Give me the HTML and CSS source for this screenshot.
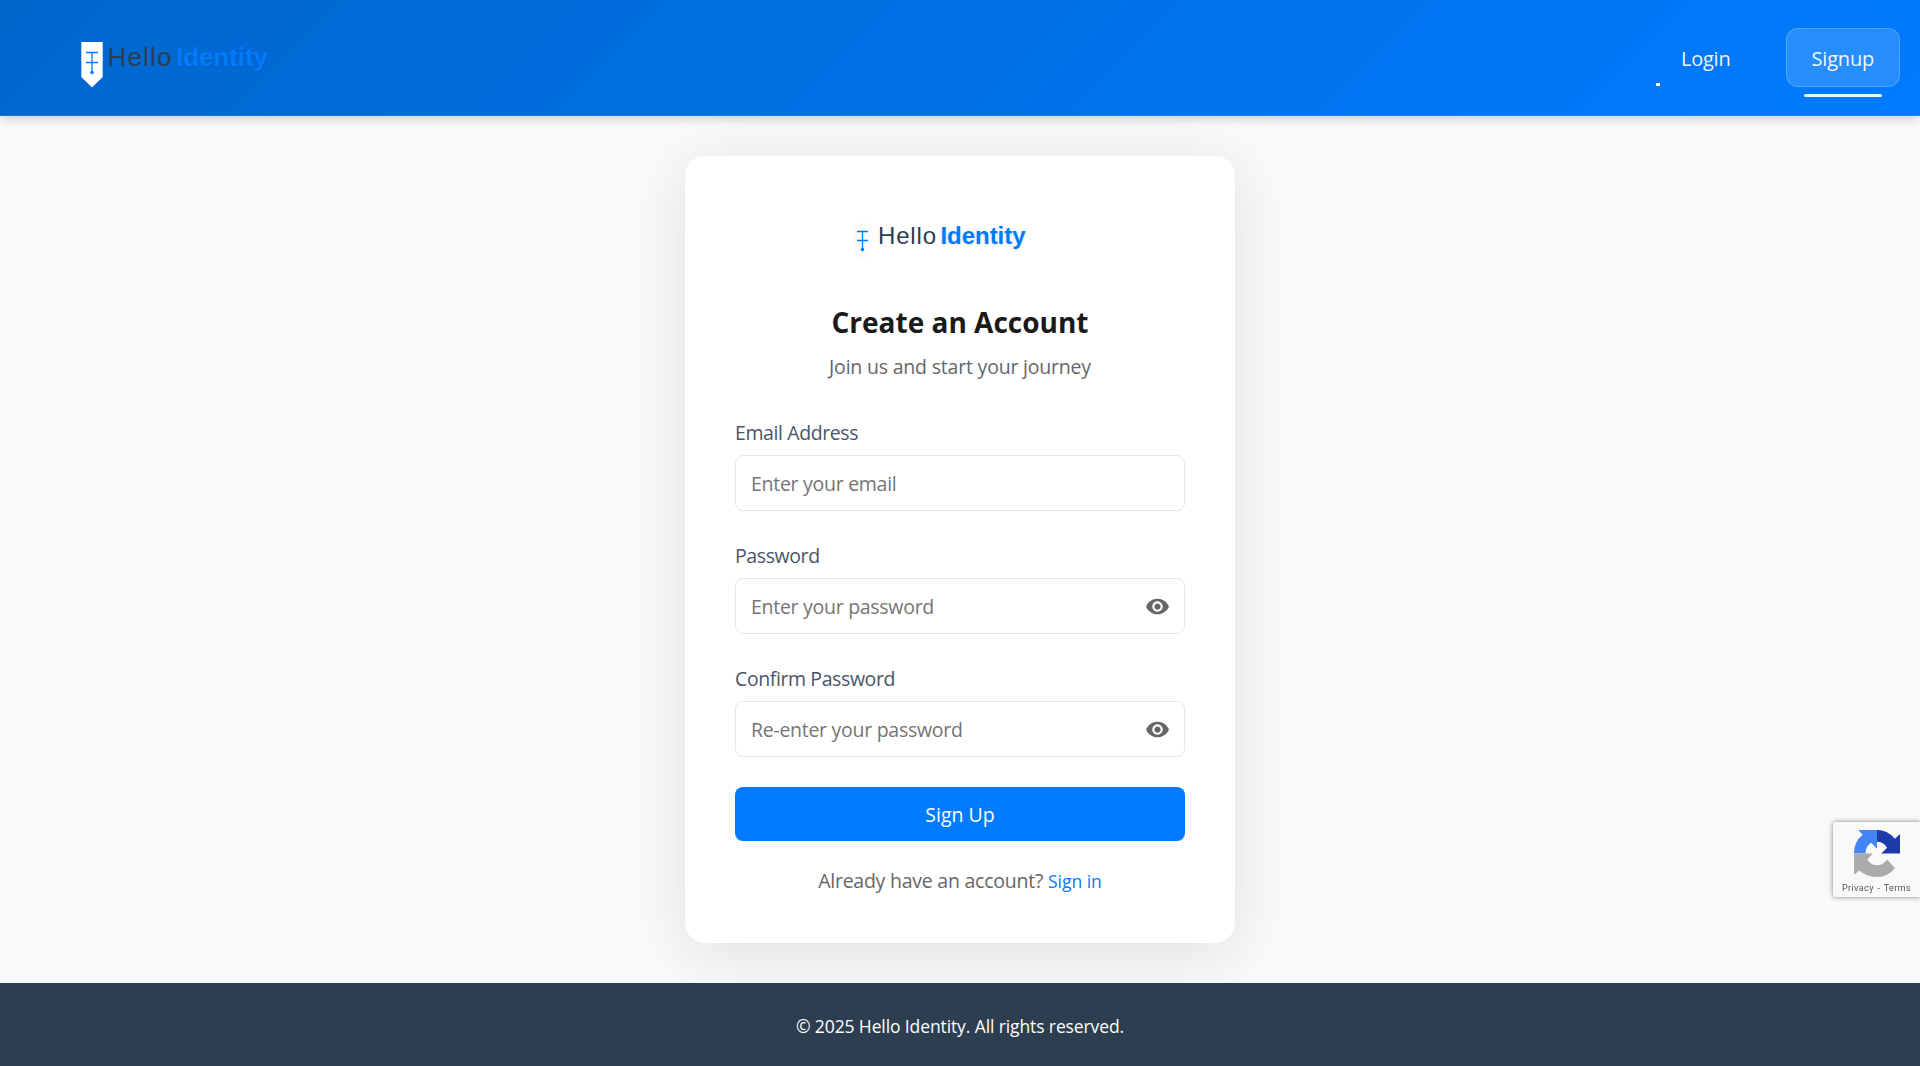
FILE: index.html
```
<!DOCTYPE html>
<html lang="en">
<head>
<meta charset="utf-8">
<title>Hello Identity</title>
<link rel="stylesheet" href="styles.css">
</head>
<body>
<header class="header">
  <svg class="brand" width="220" height="60" viewBox="0 0 220 60">
    <path class="brand-badge" d="M1.300 4h21.400v35L12 49.500 1.300 39z"/>
    <path class="brand-mark" d="M6 14.500h12M6 24.500h12M12 14.500V35"/>
    <circle class="brand-dot" cx="12" cy="34.500" r="1.800"/>
    <text class="brand-hello" x="27.500" y="28" textLength="64">Hello</text>
    <text class="brand-identity" x="96" y="28" textLength="92">Identity</text>
  </svg>
  <nav class="nav">
    <a class="nav-link">Login</a>
    <a class="nav-link nav-active">Signup</a>
  </nav>
</header>
<main class="main">
  <section class="card">
    <svg class="card-logo" width="180" height="60" viewBox="0 0 180 60">
      <path class="card-badge" d="M2 9h17v31l-8.500 7L2 40z"/>
      <path class="brand-mark" d="M5 17.500h11M5 26.500h11M10.500 17.500V36"/>
      <circle class="brand-dot" cx="10.500" cy="35.500" r="1.700"/>
      <text class="card-hello" x="26" y="30" textLength="58">Hello</text>
      <text class="card-identity" x="88.500" y="30" textLength="85">Identity</text>
    </svg>
    <h1 class="title">Create an Account</h1>
    <p class="subtitle">Join us and start your journey</p>
    <form class="form">
      <div class="field">
        <label class="label" for="email">Email Address</label>
        <div class="input-box"><input class="input" id="email" type="email" placeholder="Enter your email"></div>
      </div>
      <div class="field">
        <label class="label" for="password">Password</label>
        <div class="input-box"><input class="input" id="password" type="password" placeholder="Enter your password"><svg class="eye" viewBox="0 0 24 24"><path d="M12 4.500C7 4.500 2.730 7.610 1 12c1.730 4.390 6 7.500 11 7.500s9.270-3.110 11-7.500c-1.730-4.390-6-7.500-11-7.500zM12 17c-2.760 0-5-2.240-5-5s2.240-5 5-5 5 2.240 5 5-2.240 5-5 5zm0-8c-1.660 0-3 1.340-3 3s1.340 3 3 3 3-1.340 3-3-1.340-3-3-3z"/></svg></div>
      </div>
      <div class="field">
        <label class="label" for="confirm">Confirm Password</label>
        <div class="input-box"><input class="input" id="confirm" type="password" placeholder="Re-enter your password"><svg class="eye" viewBox="0 0 24 24"><path d="M12 4.500C7 4.500 2.730 7.610 1 12c1.730 4.390 6 7.500 11 7.500s9.270-3.110 11-7.500c-1.730-4.390-6-7.500-11-7.500zM12 17c-2.760 0-5-2.240-5-5s2.240-5 5-5 5 2.240 5 5-2.240 5-5 5zm0-8c-1.660 0-3 1.340-3 3s1.340 3 3 3 3-1.340 3-3-1.340-3-3-3z"/></svg></div>
      </div>
      <button class="submit" type="button">Sign Up</button>
    </form>
    <p class="switch">Already have an account? <a class="switch-link">Sign in</a></p>
  </section>
</main>
<footer class="footer">© 2025 Hello Identity. All rights reserved.</footer>
<aside class="recaptcha">
  <svg width="46" height="47" viewBox="0 0 64 64" preserveAspectRatio="none">
    <path fill="#1c3aa9" d="M32 0Q47 0 57 12L64 5.500V32H38L46 24Q41 16 32 16z"/>
    <path fill="#4285f4" d="M6 0H32V25.400L24 17.500Q16 22 16 32H0Q0 16 12 6.500z"/>
    <path fill="#ababab" d="M0 32H26L18.500 40Q24 48 32 48 40 48 46 40L57 52Q47 64 32 64 18 64 7.500 55L0 61z"/>
  </svg>
  <div class="recaptcha-links">Privacy - Terms</div>
</aside>
</body>
</html>
```
FILE: styles.css
```
* { box-sizing: border-box; margin: 0; padding: 0; }
body {
  min-height: 1066px;
  display: flex;
  flex-direction: column;
  background: #f9f9f9;
  font-family: "Open Sans", "Noto Sans", sans-serif;
  font-size: 19.5px;
}
.header {
  height: 116px;
  display: flex;
  justify-content: space-between;
  align-items: center;
  padding: 0 20px 0 80px;
  background: linear-gradient(135deg, #0066cc 0%, #007bff 100%);
  border-bottom: 1px solid rgba(255, 255, 255, .1);
  box-shadow: 0 2px 10px rgba(0, 0, 0, .2);
}
.brand { margin-top: 21px; overflow: visible; }
.brand-badge { fill: #fff; }
.brand-mark { fill: none; stroke: #007bff; stroke-width: 1.3; }
.brand-dot { fill: #007bff; }
.brand-hello, .brand-identity, .card-hello, .card-identity { font-family: "Liberation Sans", Arial, sans-serif; }
.brand-hello { font-size: 26px; fill: #2c3e50; }
.brand-identity { font-size: 26px; font-weight: 700; fill: #007bff; }
.brand-identity, .card-identity { text-shadow: 0 1px 3px rgba(0, 0, 0, .12); }
.nav { display: flex; gap: 29px; }
.nav-link {
  position: relative;
  height: 59px;
  display: flex;
  align-items: center;
  padding: 2px 25px 0;
  border: 1px solid transparent;
  border-radius: 12px;
  color: rgba(255, 255, 255, .95);
  font-size: 20px;
  letter-spacing: -.2px;
}
.nav-link::after {
  content: "";
  position: absolute;
  left: 0;
  bottom: 0;
  width: 4px;
  height: 3px;
  background: #fff;
}
.nav-active { background: rgba(255, 255, 255, .15); border-color: rgba(255, 255, 255, .2); }
.nav-active::after { left: 17px; bottom: -11px; width: 78px; border-radius: 2px; opacity: .9; }
.main { padding: 40px 0; display: flex; justify-content: center; }
.card {
  width: 550px;
  height: 787px;
  display: flex;
  flex-direction: column;
  align-items: center;
  padding: 58px 50px 0;
  background: #fff;
  border-radius: 20px;
  box-shadow: 0 10px 60px rgba(0, 0, 0, .1);
}
.card-badge { fill: #fafbfb; }
.card-logo { margin-left: -37px; overflow: visible; }
.card-hello { font-size: 24px; fill: #2c3e50; }
.card-identity { font-size: 24px; font-weight: 700; fill: #007bff; }
.title { margin-top: 28px; font-size: 28px; line-height: 40px; font-weight: 700; color: #1a1a1a; }
.subtitle { margin-top: 11px; line-height: 28px; letter-spacing: -.2px; color: #666; }
.form { width: 450px; margin-top: 38px; display: flex; flex-direction: column; }
.field { height: 123px; display: flex; flex-direction: column; gap: 8px; }
.label { line-height: 28px; letter-spacing: -.4px; color: #4a5568; }
.input-box {
  height: 56px;
  display: flex;
  align-items: center;
  padding: 0 14px 0 15px;
  border: 1px solid #e2e8f0;
  border-radius: 8px;
}
.input {
  flex: 1;
  min-width: 0;
  height: 100%;
  padding-top: 1px;
  border: 0;
  outline: 0;
  background: transparent;
  font: inherit;
  letter-spacing: -.28px;
}
.input::placeholder { color: #757575; }
.eye { width: 25px; height: 25px; fill: #666; }
.submit {
  height: 54px;
  margin-top: -1px;
  border: 0;
  border-radius: 8px;
  background: #007bff;
  color: #fff;
  font: inherit;
  font-weight: 500;
}
.switch { margin-top: 26px; line-height: 28px; letter-spacing: -.24px; color: #666; }
.switch-link { font-size: 17.5px; letter-spacing: 0; color: #007bff; }
.footer {
  height: 83px;
  display: flex;
  align-items: center;
  justify-content: center;
  padding-top: 2px;
  background: #2c3e50;
  color: #fff;
  font-size: 17.5px;
  letter-spacing: -.11px;
}
.recaptcha {
  position: fixed;
  right: 0;
  bottom: 169px;
  width: 87px;
  height: 75px;
  display: flex;
  flex-direction: column;
  align-items: center;
  padding: 8px 0 0;
  border-radius: 3px 0 0 3px;
  background: #f9f9f9;
  box-shadow: 0 0 5px gray;
}
.recaptcha-links {
  margin-top: 4px;
  font: 9px/14px Roboto, sans-serif;
  letter-spacing: .4px;
  word-spacing: 1px;
  color: #555;
  white-space: nowrap;
}
```
